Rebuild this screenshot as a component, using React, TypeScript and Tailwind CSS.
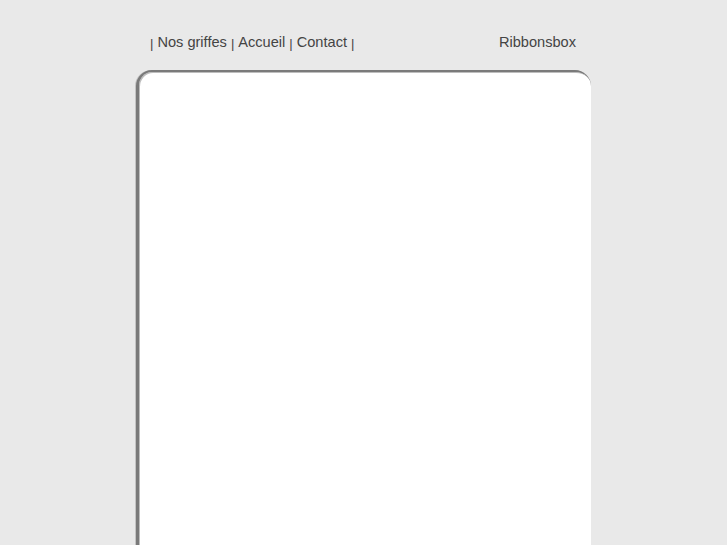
export default function App() {
  const links = ['Nos griffes', 'Accueil', 'Contact']

  return (
    <div className="min-h-screen bg-[#e9e9e9] font-['Liberation_Sans',Arial,sans-serif] text-[#444]">
      <div className="mx-auto w-[455px] pt-[32px]">
        {/* Header */}
        <div className="flex h-[22px] items-center justify-between pl-[14px] pr-[15px] text-[14.6px]">
          <div className="flex items-center">
            <span className="mt-[1px] text-[13px]">|</span>
            {links.map((l) => (
              <span key={l} className="flex items-center">
                <a href="#" className="px-[4px] text-[#444]">{l}</a>
                <span className="mt-[1px] text-[13px]">|</span>
              </span>
            ))}
          </div>
          <a href="#" className="text-[#444]">Ribbonsbox</a>
        </div>

        {/* Content box */}
        <div className="mt-[16px] h-[480px] rounded-t-[16px] border-l-[3px] border-t-[2px] border-[#7a7a7a] bg-white shadow-[-1px_0_0_#c4c4c4,inset_1px_1px_0_#bdbdbd]" />
      </div>
    </div>
  )
}
